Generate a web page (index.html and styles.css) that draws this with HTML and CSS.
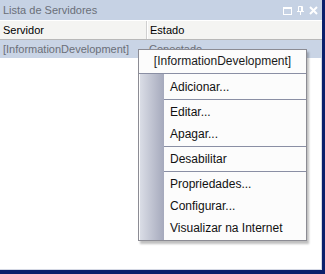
FILE: index.html
```html
<!DOCTYPE html>
<html lang="pt-BR">
<head>
    <meta charset="UTF-8">
    <title>Lista de Servidores</title>
    <link rel="stylesheet" href="styles.css">
</head>
<body>
    <div class="painel">
        <div class="titulo">
            <span class="titulo-texto">Lista de Servidores</span>
            <span class="titulo-botoes">
                <svg width="9" height="9" viewBox="0 0 9 9"><rect x="0.5" y="1.5" width="8" height="7" fill="none" stroke="#fff"/><rect x="0" y="1" width="9" height="2" fill="#fff"/></svg>
                <svg width="9" height="9" viewBox="0 0 9 9"><path d="M2.5 0.5h4v5h-4z M1 5.5h7 M4.5 5.5v3.5" fill="none" stroke="#fff"/><path d="M5 1h1v4h-1z" fill="#fff"/></svg>
                <svg width="9" height="9" viewBox="0 0 9 9"><path d="M1 1l7 7M8 1l-7 7" stroke="#fff" stroke-width="2"/></svg>
            </span>
        </div>
        <div class="tabela">
            <div class="cabecalho">
                <div class="col col-servidor">Servidor</div>
                <div class="col col-estado">Estado</div>
            </div>
            <div class="linha">
                <div class="col col-servidor">[InformationDevelopment]</div>
                <div class="col col-estado">Conectado</div>
            </div>
        </div>

        <!-- menu de contexto sobre a lista -->
        <div class="menu">
            <div class="menu-titulo">[InformationDevelopment]</div>
            <div class="menu-corpo">
                <div class="menu-item">Adicionar...</div>
                <div class="separador"></div>
                <div class="menu-item">Editar...</div>
                <div class="menu-item">Apagar...</div>
                <div class="separador"></div>
                <div class="menu-item">Desabilitar</div>
                <div class="separador"></div>
                <div class="menu-item">Propriedades...</div>
                <div class="menu-item">Configurar...</div>
                <div class="menu-item">Visualizar na Internet</div>
            </div>
        </div>
    </div>
</body>
</html>
```

FILE: styles.css
```css
body {
    margin: 0;
    font-family: "Liberation Sans", Arial, sans-serif;
    font-size: 11px;
    background: #fff;
}

.painel {
    position: relative;
    width: 322px;
    height: 270px;
    border-right: 3px solid #0b1f6b;
    border-bottom: 4px solid #0b1f6b;
    box-shadow: inset -1px -1px 0 #d4d8e4;
    background: #fff;
}

.titulo {
    height: 20px;
    background: #c6d2e4;
    display: flex;
    align-items: center;
    justify-content: space-between;
    padding: 0 4px 0 3px;
}

.titulo-texto {
    color: #6a6f78;
    font-size: 11px;
}

.titulo-botoes {
    display: flex;
    gap: 4px;
    align-items: center;
}

.cabecalho {
    display: flex;
    height: 18px;
    background: #f4f4f2;
    border-bottom: 1px solid #b8b8b8;
    border-top: 1px solid #fff;
    color: #000;
}

.cabecalho .col-servidor {
    border-right: 1px solid #d0d0d0;
    box-shadow: 1px 0 0 #fff;
}

.linha {
    display: flex;
    height: 18px;
    background: #c9d4e5;
    color: #6b6f78;
}

.col {
    display: flex;
    align-items: center;
    padding-left: 3px;
}

.col-servidor {
    width: 143px;
    white-space: nowrap;
}

.menu {
    position: absolute;
    left: 138px;
    top: 49px;
    width: 167px;
    font-size: 12px;
    background: #fcfcfc;
    border: 1px solid #8c8c94;
    box-shadow: 2px 3px 2px rgba(0, 0, 0, 0.25);
}

.menu-titulo {
    text-align: center;
    height: 23px;
    line-height: 23px;
    border-bottom: 1px solid #8a8fa4;
    color: #1a1a1a;
}

.menu-corpo {
    background: linear-gradient(to right, #fcfcfc 0, #fcfcfc 1px, #dadde6 1px, #a5a9bc 25px, #fcfcfc 25px);
    padding: 2px 0 1px 0;
}

.menu-item {
    height: 22px;
    line-height: 22px;
    padding-left: 31px;
    color: #111;
    white-space: nowrap;
}

.separador {
    height: 1px;
    margin: 1px 0 1px 25px;
    background: #8a8fa4;
}
```
